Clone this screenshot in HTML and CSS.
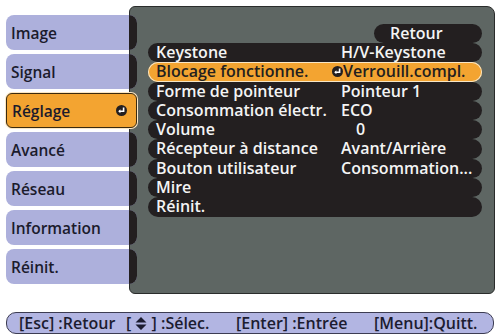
FILE: index.html
```html
<!DOCTYPE html>
<html lang="fr">
<head>
    <meta charset="UTF-8">
    <title>Réglage</title>
    <link rel="stylesheet" href="styles.css">
</head>
<body>
    <div class="screen">
        <div class="main">
            <!-- Left menu -->
            <nav class="tabs">
                <div class="tab"><span class="tab-label">Image</span><span class="tab-cap"></span></div>
                <div class="tab"><span class="tab-label">Signal</span><span class="tab-cap"></span></div>
                <div class="tab tab-active">
                    <span class="tab-label">Réglage</span>
                    <svg class="enter-icon" width="11" height="11" viewBox="0 0 11 11">
                        <circle cx="5.5" cy="5.5" r="5.5" fill="#231f20"/>
                        <path d="M7.6 2.4 V6.3 H3.6" fill="none" stroke="#fff" stroke-width="1.6"/>
                        <path d="M2.2 6.3 L4.4 4.3 V8.3 Z" fill="#fff"/>
                    </svg>
                </div>
                <div class="tab"><span class="tab-label">Avancé</span><span class="tab-cap"></span></div>
                <div class="tab"><span class="tab-label">Réseau</span><span class="tab-cap"></span></div>
                <div class="tab"><span class="tab-label">Information</span><span class="tab-cap"></span></div>
                <div class="tab"><span class="tab-label">Réinit.</span><span class="tab-cap"></span></div>
            </nav>

            <!-- Sub menu -->
            <section class="panel">
                <div class="back-row"><span class="back">Retour</span></div>
                <div class="row"><span class="label">Keystone</span><span class="value">H/V-Keystone</span></div>
                <div class="row row-active">
                    <span class="label">Blocage fonctionne.</span>
                    <span class="value value-icon">
                        <svg class="enter-icon" width="11" height="11" viewBox="0 0 11 11">
                            <circle cx="5.5" cy="5.5" r="5.5" fill="#231f20"/>
                            <path d="M7.6 2.4 V6.3 H3.6" fill="none" stroke="#fff" stroke-width="1.6"/>
                            <path d="M2.2 6.3 L4.4 4.3 V8.3 Z" fill="#fff"/>
                        </svg>Verrouill.compl.
                    </span>
                </div>
                <div class="row"><span class="label">Forme de pointeur</span><span class="value">Pointeur 1</span></div>
                <div class="row"><span class="label">Consommation électr.</span><span class="value">ECO</span></div>
                <div class="row"><span class="label">Volume</span><span class="value value-num">0</span></div>
                <div class="row"><span class="label">Récepteur à distance</span><span class="value">Avant/Arrière</span></div>
                <div class="row"><span class="label">Bouton utilisateur</span><span class="value">Consommation...</span></div>
                <div class="row"><span class="label">Mire</span><span class="value"></span></div>
                <div class="row"><span class="label">Réinit.</span><span class="value"></span></div>
            </section>
        </div>

        <!-- Key help bar -->
        <footer class="help">
            <span>[Esc] :Retour</span>
            <span>[ <svg class="updown" width="12" height="13" viewBox="0 0 12 13"><path d="M6 0 L11.5 5.5 H0.5 Z M0.5 7.5 H11.5 L6 13 Z" fill="#1c1c30"/></svg> ] :Sélec.</span>
            <span>[Enter] :Entrée</span>
            <span>[Menu]:Quitt.</span>
        </footer>
    </div>
</body>
</html>
```

FILE: styles.css
```css
body {
    margin: 0;
    background-color: #ffffff;
    font-family: "Open Sans", "DejaVu Sans", sans-serif;
    font-weight: 600;
    font-size: 15px;
}

.screen {
    width: 495px;
    height: 334px;
    overflow: hidden;
}

.main {
    display: flex;
    align-items: flex-start;
    padding: 6px 0 0 6px;
}

/* Left menu */
.tabs {
    position: relative;
    z-index: 1;
    width: 132px;
    margin-top: 9px;
    display: flex;
    flex-direction: column;
    gap: 4px;
}

.tab {
    display: flex;
    align-items: center;
    height: 35px;
    background-color: #adb0dc;
    border-radius: 8px;
    overflow: hidden;
    color: #1b1b2c;
    font-size: 15.5px;
}

.tab-label {
    flex: 1;
    padding-left: 5px;
}

.tab-cap {
    width: 8px;
    height: 100%;
    background-color: #231f20;
}

.tab-active {
    width: 129px;
    height: 33px;
    background-color: #f3a431;
    border: 1px solid #3a2a10;
    border-radius: 6px;
    box-shadow: 0 0 0 1px #fbe7c4;
}

.tab-active .enter-icon {
    margin-right: 9px;
}

/* Sub menu */
.panel {
    width: 343px;
    height: 269px;
    margin-left: -8px;
    padding: 17px 12px 0 18px;
    background-color: #5e6663;
    border: 1px solid #2a2c2b;
    border-radius: 6px 8px 6px 6px;
    color: #f4f4f4;
    font-size: 16px;
}

.back-row {
    display: flex;
    justify-content: flex-end;
    height: 19px;
}

.back {
    width: 92px;
    padding-left: 16px;
    line-height: 19px;
    background-color: #231f20;
    border-radius: 10px;
}

.row {
    display: grid;
    grid-template-columns: 183px 1fr;
    height: 19.3px;
    line-height: 19px;
    background-color: #231f20;
    border-radius: 10px;
    white-space: nowrap;
}

.label {
    padding-left: 8px;
}

.value {
    padding-left: 10px;
}

.value-icon {
    display: flex;
    align-items: center;
    padding-left: 0;
}

.value-icon .enter-icon {
    margin: 0 0 0 1px;
}

.value-num {
    padding-left: 25px;
}

.row-active {
    background-color: #f3a431;
    color: #231f20;
    box-shadow: inset 0 0 0 1px #f7e6c6;
}

/* Key help bar */
.help {
    display: grid;
    grid-template-columns: 107px 110px 138px auto;
    align-items: center;
    width: 474px;
    height: 20px;
    margin: 18px 0 0 6px;
    padding-left: 12px;
    background-color: #b2b5e2;
    border: 1px solid #3c3c52;
    border-radius: 10px;
    color: #1c1c30;
    white-space: nowrap;
    line-height: 20px;
    font-size: 16px;
}

.updown {
    vertical-align: -1px;
}
```
